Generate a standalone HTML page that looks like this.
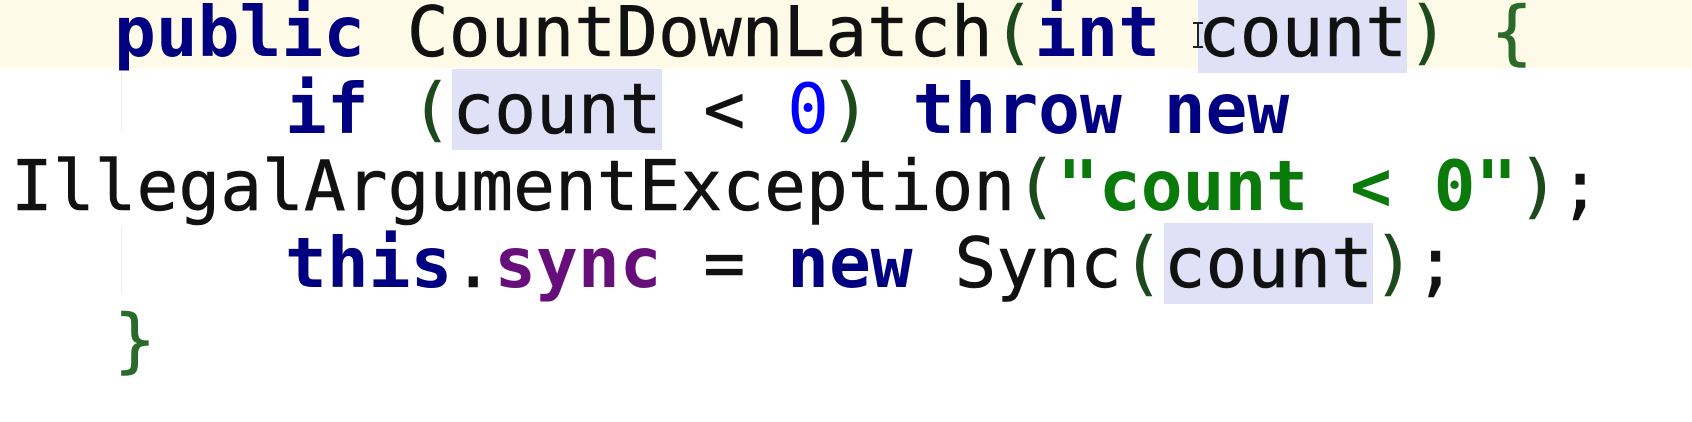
<!DOCTYPE html>
<html><head><style>
html,body{margin:0;padding:0;width:1692px;height:422px;background:#fff;overflow:hidden}
.hl{position:absolute;left:0;top:0;width:1692px;height:68px;background:#fdfbe8}
.l{position:absolute;white-space:pre;font-family:"DejaVu Sans Mono","Liberation Mono",monospace;font-size:69.5px;line-height:77px;color:#111;-webkit-text-stroke:0.6px #111}
.k{color:#000080;font-weight:bold;-webkit-text-stroke:0}
.s{color:#0a7a0a;font-weight:bold;-webkit-text-stroke:0}
.f{color:#660e7a;font-weight:bold;-webkit-text-stroke:0}
.n{color:#0000ff;-webkit-text-stroke:0}
.p{color:#1d4a1d;-webkit-text-stroke-color:#1d4a1d}
.b{color:#2a6a2a;-webkit-text-stroke-color:#2a6a2a}
.c{background:#e0e0f6}
.guide{position:absolute;left:121px;width:1px;background:#eee}
.cur{position:absolute;left:1191px;top:22px;width:14px;height:26px}
</style></head><body>
<div class="hl"></div>
<div class="guide" style="top:72px;height:60px"></div>
<div class="guide" style="top:225px;height:70px"></div>
<div class="l" style="left:114px;top:-6px"><span class="k">public</span> CountDownLatch<span class="p">(</span><span class="k">int</span> <span style="margin-left:-4px"></span><span class="c">count</span><span class="p">)</span> <span class="b">{</span></div>
<svg class="cur" viewBox="0 0 14 26"><path d="M2 1h10M7 1v24M2 25h10" stroke="#222" stroke-width="2" fill="none"/></svg>
<div class="l" style="left:285px;top:71px"><span class="k">if</span> <span class="p">(</span><span class="c">count</span> &lt; <span class="n">0</span><span class="p">)</span> <span class="k">throw new</span></div>
<div class="l" style="left:11px;top:148px">IllegalArgumentException<span class="p">(</span><span class="s">"count &lt; 0"</span><span class="p">)</span>;</div>
<div class="l" style="left:285px;top:225px"><span class="k">this</span>.<span class="f">sync</span> = <span class="k">new</span> Sync<span class="p">(</span><span class="c">count</span><span class="p">)</span>;</div>
<div class="l" style="left:114px;top:302px"><span class="b">}</span></div>
</body></html>
